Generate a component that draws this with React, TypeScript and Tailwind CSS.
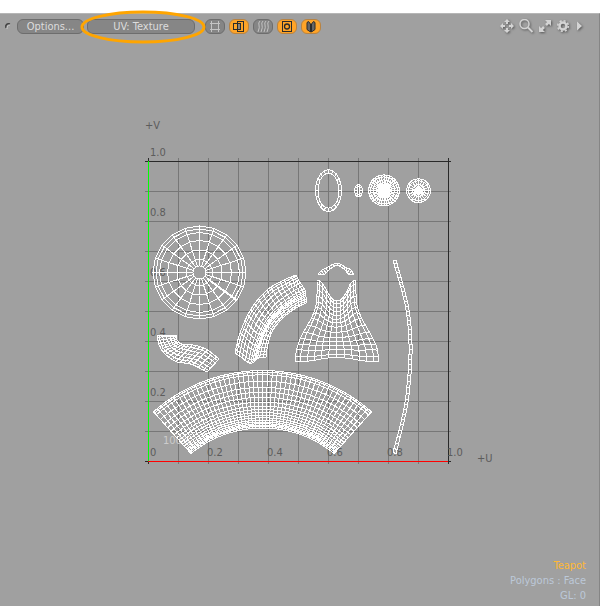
import type { ReactNode } from 'react';

type Point = [number, number];

const TICKS = [0, 1, 2, 3, 4, 5, 6, 7, 8, 9, 10];
const LEFT = 148;
const TOP = 161;
const SIZE = 300;

const toPath = (points: Point[]) => 'M' + points.map(([x, y]) => `${x.toFixed(1)} ${y.toFixed(1)}`).join('L');

// Steps from 0 to 1
const steps = (n: number) => Array.from({ length: n + 1 }, (_, i) => i / n);

// Catmull-Rom point on a list of control points
function sample(points: Point[], t: number): Point {
    const n = points.length - 1;
    const i = Math.min(Math.floor(t * n), n - 1);
    const f = t * n - i;
    const a = points[Math.max(i - 1, 0)];
    const b = points[i];
    const c = points[i + 1];
    const d = points[Math.min(i + 2, n)];
    const at = (k: 0 | 1) =>
        0.5 * (2 * b[k] + (c[k] - a[k]) * f + (2 * a[k] - 5 * b[k] + 4 * c[k] - d[k]) * f * f + (3 * b[k] - a[k] - 3 * c[k] + d[k]) * f * f * f);
    return [at(0), at(1)];
}

// Both families of lines for a surface given as (u, v) => point
function meshPath(surface: (u: number, v: number) => Point, us: number[], vs: number[]) {
    return [
        ...us.map((u) => toPath(vs.map((v) => surface(u, v)))),
        ...vs.map((v) => toPath(us.map((u) => surface(u, v)))),
    ].join('');
}

// Coons patch between four boundary curves
function patch(top: Point[], bottom: Point[], left: Point[], right: Point[]) {
    return (u: number, v: number): Point => {
        const t = sample(top, u);
        const b = sample(bottom, u);
        const l = sample(left, v);
        const r = sample(right, v);
        const at = (k: 0 | 1) =>
            (1 - v) * t[k] + v * b[k] + (1 - u) * l[k] + u * r[k] -
            ((1 - u) * (1 - v) * top[0][k] + u * (1 - v) * top[top.length - 1][k] + (1 - u) * v * bottom[0][k] + u * v * bottom[bottom.length - 1][k]);
        return [at(0), at(1)];
    };
}

function discPath(cx: number, cy: number, rings: Point[], spokes: number) {
    const surface = (u: number, v: number): Point => [
        cx + rings[v][0] * Math.cos(u * 2 * Math.PI),
        cy + rings[v][1] * Math.sin(u * 2 * Math.PI),
    ];
    return meshPath(surface, steps(spokes), rings.map((_, i) => i));
}

const circles = (radii: number[]): Point[] => radii.map((r) => [r, r]);

const spout = patch(
    [[235, 353], [240, 333], [251, 309], [267, 290], [284, 280], [296, 275]],
    [[266, 357], [268, 344], [273, 330], [283, 318], [296, 308], [306, 303]],
    [[235, 353], [241, 357], [249, 363], [254, 362], [258, 358], [266, 357]],
    [[296, 275], [299, 281], [305, 290], [306, 296], [306, 303]],
);

const handle = patch(
    [[176, 335], [177, 340], [182, 344], [193, 345], [206, 349], [219, 359]],
    [[157, 335], [159, 345], [165, 354], [177, 362], [191, 364], [207, 372]],
    [[176, 335], [157, 335]],
    [[219, 359], [207, 372]],
);

const skirt = patch(
    [[317, 281], [321, 281], [327, 291], [332, 299], [337, 301], [342, 299], [347, 291], [352, 281], [356, 281]],
    [[295, 361], [310, 361], [327, 358], [346, 358], [364, 361], [379, 362]],
    [[317, 281], [317, 293], [316, 306], [311, 319], [302, 335], [297, 348], [295, 361]],
    [[356, 281], [356, 293], [357, 306], [362, 319], [371, 335], [377, 348], [379, 362]],
);

const chevron = patch(
    [[318, 274], [322, 270], [328, 267], [337, 263], [345, 267], [351, 270], [354, 275]],
    [[320, 275], [325, 274], [329, 270], [337, 265], [345, 270], [348, 274], [354, 275]],
    [[318, 274], [320, 275]],
    [[354, 275], [354, 275]],
);

const strip = patch(
    [[393, 261], [399, 281], [405, 304], [408, 326], [409, 349], [408, 374], [405, 402], [400, 426], [393, 452]],
    [[396, 260], [402, 281], [408, 304], [411, 326], [412, 349], [411, 374], [408, 402], [403, 426], [396, 454]],
    [[393, 261], [396, 260]],
    [[393, 452], [396, 454]],
);

// Teapot body: a fan between two arcs with slightly different centres
const body = (u: number, v: number): Point => {
    const outer = (u * 2 - 1) * 0.724;
    const inner = (u * 2 - 1) * 0.686;
    return [
        262.5 + (1 - v) * 164.5 * Math.sin(outer) + v * 113 * Math.sin(inner),
        (1 - v) * (535 - 164.5 * Math.cos(outer)) + v * (541 - 113 * Math.cos(inner)),
    ];
};
const BODY_ROWS = [31, 36, 44, 63, 82, 97, 112, 127, 139, 149, 158, 166, 174, 181, 187, 192, 196, 200, 205].map((y) => (y - 31) / 174);

const MESHES = [
    discPath(199.5, 272.5, circles([46.5, 43.5, 40, 32, 22.5, 13, 6.5]), 20),
    'M207 279L237 301',
    discPath(328.5, 190.7, [[13, 21], [10.5, 17.5]], 20),
    discPath(358.5, 190.7, [[4, 6.5], [1.5, 4]], 10),
    discPath(384, 190.4, circles([15.5, 13.5, 10.5, 7.5, 6, 5, 4, 3, 2, 1]), 32),
    discPath(418.5, 190.7, circles([12, 10, 6, 3, 2, 1, 0]), 20),
    meshPath(spout, steps(20), steps(13)),
    meshPath(handle, steps(17), steps(6)),
    meshPath(skirt, steps(12), steps(14)),
    meshPath(chevron, steps(14), steps(1)),
    meshPath(strip, steps(38), steps(1)),
    meshPath(body, steps(48), BODY_ROWS),
];

function UVPlot() {
    return (
        <svg viewBox="100 110 400 370" className="w-[400px] max-w-full" role="img" aria-label="UV map">
            <g shapeRendering="crispEdges" fill="none">
                {/* Grid */}
                {TICKS.map((i) => (
                    <g key={i} stroke={i === 10 ? '#292929' : '#777777'}>
                        <path d={`M${LEFT + i * 30 + 0.5} 158V464`} />
                        <path d={`M145 ${TOP + SIZE - i * 30 + 0.5}H451`} />
                    </g>
                ))}
                <path d="M145 461.5H451M148.5 158V464" stroke="#292929" />
                <path d="M148 461.5H448" stroke="#ff0000" />
                <path d="M148.5 161V461" stroke="#00ff00" />
            </g>

            {/* Axis labels */}
            <g fill="#5c5c5c" fontSize="11">
                <text x="145" y="129">+V</text>
                <text x="477" y="462">+U</text>
                {[2, 4, 6, 8, 10].map((i) => (
                    <g key={i}>
                        <text x="150" y={456 - i * 30}>{(i / 10).toFixed(1)}</text>
                        <text x={147 + i * 30} y="456">{(i / 10).toFixed(1)}</text>
                    </g>
                ))}
                <text x="150" y="456">0</text>
                <text x="163" y="444" fill="#cccccc">100%</text>
            </g>

            <g shapeRendering="crispEdges" fill="none" stroke="#ffffff">
                {MESHES.map((d, i) => (
                    <path key={i} d={d} />
                ))}
            </g>
        </svg>
    );
}

function ToolButton({ label, active = false, children }: { label: string; active?: boolean; children: ReactNode }) {
    return (
        <button
            aria-label={label}
            aria-pressed={active}
            className={`flex h-[15px] w-5 items-center justify-center rounded-[6px] border ${active ? 'border-[#b78343] bg-[#ffa427] text-[#2b2b2b]' : 'border-[#6d6d6d] bg-[#858585] text-[#c4c4c4]'}`}
        >
            <svg width="14" height="13" viewBox="0 0 14 13" fill="none" stroke="currentColor" className="shrink-0">
                {children}
            </svg>
        </button>
    );
}

function ViewButton({ label, children }: { label: string; children: ReactNode }) {
    return (
        <button aria-label={label} className="text-[#d4d4d4]">
            <svg width="16" height="15" viewBox="0 1 16 15" fill="none" stroke="currentColor" className="drop-shadow-[1px_1px_1px_#555555]">
                {children}
            </svg>
        </button>
    );
}

function Toolbar() {
    const pill = 'h-[15px] rounded-[6px] border border-[#6d6d6d] bg-[#868686] text-[11px] leading-[12px] text-[#dddddd]';
    return (
        <header className="flex items-start justify-between pt-[5px] pr-[11px] pl-1">
            <div className="flex items-start gap-1">
                <svg width="9" height="13" viewBox="0 0 9 13" fill="none" aria-hidden="true">
                    <path d="M2 9C1 6 3 4 6 5" stroke="#404040" strokeWidth="1.5" />
                    <path d="M3 10C3 7 4 6 6 6" stroke="#c8c8c8" />
                </svg>
                <button className={`${pill} w-[67px]`}>Options...</button>
                <div className="relative ml-[-1px] flex">
                    <button className={`${pill} w-[108px]`}>UV: Texture</button>
                    <svg className="pointer-events-none absolute -top-[9px] -left-[7px]" width="126" height="34" viewBox="0 0 126 34" fill="none" aria-hidden="true">
                        <ellipse cx="63" cy="17" rx="61" ry="15" stroke="#ffa500" strokeWidth="3" />
                    </svg>
                </div>
                <div className="ml-1.5 flex gap-1">
                    <ToolButton label="Show grid">
                        <path d="M3.5 1V12M10.5 1V12M2 3.5H12M2 9.5H12" shapeRendering="crispEdges" />
                    </ToolButton>
                    <ToolButton label="Show overlap" active>
                        <path d="M5 3h4v7H5z" fill="#858585" stroke="none" />
                        <path d="M1.5 3.5h7v6h-7zM5.5 1.5h6v10h-6z" shapeRendering="crispEdges" />
                    </ToolButton>
                    <ToolButton label="Show distortion">
                        <path d="M4 1q-2 2-1 4t-1 7M7 1q-2 2-1 4t-1 7M10 1q-2 2-1 4t-1 7M13 1q-2 2-1 4t-1 7" />
                    </ToolButton>
                    <ToolButton label="Show texture" active>
                        <path d="M2.5 1.5h9v10h-9z" shapeRendering="crispEdges" />
                        <circle cx="7" cy="6.5" r="2.5" strokeWidth="1.3" />
                    </ToolButton>
                    <ToolButton label="Show flipped" active>
                        <path d="M3 2.5L4.5 1.5L6.5 4V12L3 9.5zM7.5 4L9.5 1.5L11 2.5V9.5L7.5 12z" fill="#666666" />
                    </ToolButton>
                </div>
            </div>

            <div className="flex gap-[3px]">
                <ViewButton label="Pan">
                    <path d="M8 1l3 3H5zM8 15l3-3H5zM1 8l3-3v6zM15 8l-3-3v6z" fill="currentColor" stroke="none" />
                    <path d="M8 3v3M8 10v3M3 8h3M10 8h3" strokeWidth="2" />
                </ViewButton>
                <ViewButton label="Zoom">
                    <circle cx="6.5" cy="6" r="4.5" strokeWidth="1.5" />
                    <path d="M10 9.5L14.5 14" strokeWidth="2" />
                </ViewButton>
                <ViewButton label="Fit">
                    <path d="M8 2h6v6zM2 8v6h6z" fill="currentColor" stroke="none" />
                    <path d="M12 4L9 7M4 12L7 9" strokeWidth="2.5" />
                </ViewButton>
                <div className="flex">
                    <ViewButton label="Settings">
                        <circle cx="7" cy="8" r="3.5" strokeWidth="2.5" />
                        <circle cx="7" cy="8" r="5.3" strokeWidth="1.6" strokeDasharray="2.1 2.06" />
                    </ViewButton>
                    <ViewButton label="More">
                        <path d="M5 3.5V12.5L10 8z" fill="currentColor" stroke="none" />
                    </ViewButton>
                </div>
            </div>
        </header>
    );
}

export default function App() {
    return (
        <div className="flex min-h-screen flex-col bg-white pt-[13px] font-['DejaVu_Sans_Condensed','Open_Sans',sans-serif] text-[11px]">
            <div className="flex flex-1 flex-col border-t border-r border-t-[#b6b6b6] border-r-[#858585] bg-[#a0a0a0]">
                <Toolbar />

                <main className="flex flex-1 items-center justify-center pb-0.5">
                    <UVPlot />
                </main>

                {/* Selection info */}
                <footer className="pr-[13px] pb-[3px] text-right leading-[15px] text-[#bcc8d8]">
                    <p className="text-[#ffb833]">Teapot</p>
                    <p>Polygons : Face</p>
                    <p>GL: 0</p>
                </footer>
            </div>
        </div>
    );
}
